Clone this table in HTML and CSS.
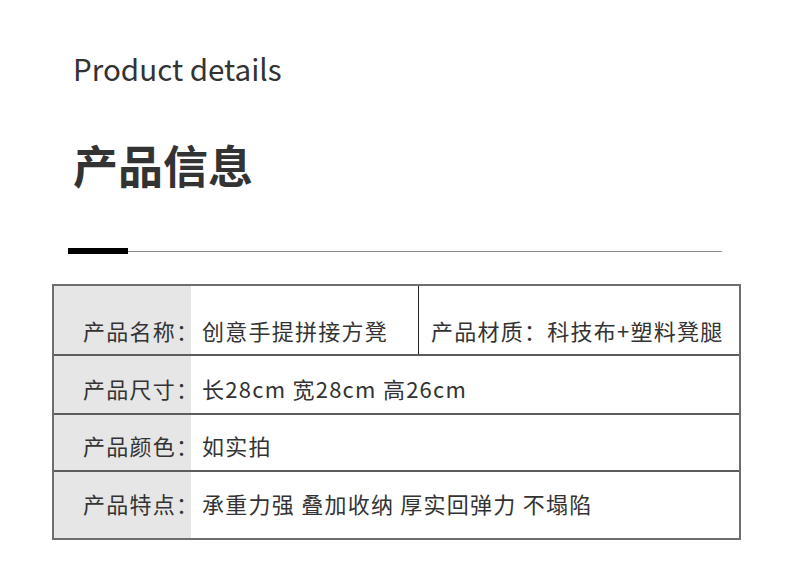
FILE: index.html
```html
<!DOCTYPE html>
<html lang="zh-CN">
<head>
<meta charset="utf-8">
<title>Product details</title>
<link rel="stylesheet" href="styles.css">
</head>
<body>
<div class="page">
  <div class="en-title">Product details</div>
  <h1 class="cn-title">产品信息</h1>
  <div class="rule"><span class="rule-bar"></span><span class="rule-line"></span></div>
  <div class="spec">
    <div class="row row-name">
      <div class="label">产品名称：</div>
      <div class="value value-split">创意手提拼接方凳</div>
      <div class="value value-rest">产品材质：科技布+塑料凳腿</div>
    </div>
    <div class="row row-size">
      <div class="label">产品尺寸：</div>
      <div class="value">长28cm 宽28cm 高26cm</div>
    </div>
    <div class="row row-color">
      <div class="label">产品颜色：</div>
      <div class="value">如实拍</div>
    </div>
    <div class="row row-feature">
      <div class="label">产品特点：</div>
      <div class="value">承重力强 叠加收纳 厚实回弹力 不塌陷</div>
    </div>
  </div>
</div>
</body>
</html>
```

FILE: styles.css
```css
html, body {
  margin: 0;
  padding: 0;
  background: #ffffff;
}
body {
  font-family: "Noto Sans CJK SC", "Noto Sans", sans-serif;
  color: #333333;
}
.page {
  width: 790px;
  height: 563px;
  overflow: hidden;
}
.en-title {
  margin: 54px 0 0 73px;
  font-size: 29.6px;
  line-height: 30px;
  font-weight: 400;
  color: #333333;
}
.cn-title {
  margin: 58px 0 0 73px;
  font-size: 45px;
  line-height: 45px;
  font-weight: 700;
  color: #333333;
}
.rule {
  display: flex;
  align-items: center;
  margin: 61px 0 0 68px;
  width: 654px;
  height: 6px;
}
.rule-bar {
  width: 60px;
  height: 6px;
  background: #000000;
}
.rule-line {
  flex: 1;
  height: 1px;
  background: #8a8a8a;
}
.spec {
  margin: 30px 0 0 52px;
  width: 689px;
  box-sizing: border-box;
  border: 2px solid #6e6e6e;
}
.row {
  display: flex;
  border-bottom: 2px solid #5c5c5c;
  font-size: 22px;
  line-height: 22px;
  letter-spacing: 1.25px;
  white-space: nowrap;
}
.row:last-child {
  border-bottom: none;
}
.label {
  width: 137px;
  flex: none;
  background: #e6e6e6;
  padding-left: 29px;
  box-sizing: border-box;
}
.value {
  padding-left: 11px;
}
.value-split {
  width: 228px;
  flex: none;
  box-sizing: border-box;
  border-right: 1px solid #222222;
}
.value-rest {
  flex: 1;
  padding-left: 12px;
}
.row > div {
  padding-top: var(--pt, 20px);
}
.row-name { height: 68px; --pt: 33px; }
.row-size { height: 57px; --pt: 21px; }
.row-color { height: 55px; --pt: 19px; }
.row-feature { height: 66px; --pt: 20px; }
```
